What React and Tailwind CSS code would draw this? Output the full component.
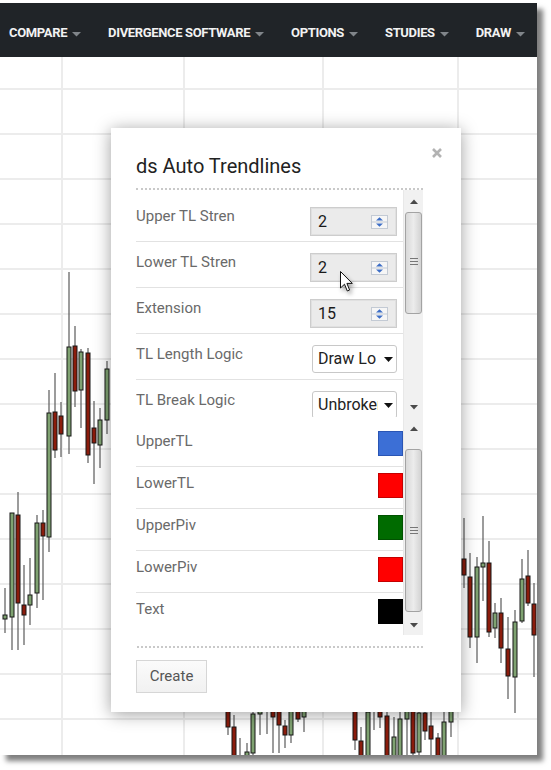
import React from 'react';

const navItems = ['Compare', 'Divergence Software', 'Options', 'Studies', 'Draw'];

// x, bodyTop, bodyBottom, wickTop, wickBottom, up
const candles = [
  [5, 615, 619, 588, 633, 1],
  [12, 513, 617, 513, 650, 1],
  [18, 515, 603, 492, 650, 0],
  [24, 605, 615, 565, 645, 0],
  [30, 595, 605, 558, 625, 1],
  [37, 523, 593, 515, 608, 1],
  [43, 523, 536, 510, 600, 0],
  [49, 413, 537, 390, 552, 1],
  [55, 412, 450, 373, 458, 0],
  [61, 416, 434, 402, 457, 0],
  [69, 347, 436, 272, 454, 1],
  [75, 346, 391, 326, 407, 0],
  [81, 352, 390, 349, 428, 1],
  [88, 353, 455, 348, 463, 0],
  [94, 428, 443, 401, 484, 0],
  [100, 420, 445, 408, 468, 1],
  [107, 369, 420, 361, 434, 1],
  [464, 559, 575, 518, 588, 0],
  [470, 577, 637, 553, 648, 0],
  [477, 567, 637, 557, 663, 1],
  [483, 563, 567, 516, 601, 1],
  [489, 563, 632, 541, 637, 0],
  [495, 613, 628, 603, 638, 1],
  [501, 613, 648, 598, 663, 0],
  [508, 649, 676, 617, 699, 0],
  [515, 622, 677, 610, 713, 1],
  [522, 579, 621, 559, 623, 1],
  [528, 576, 603, 550, 606, 0],
  [534, 604, 635, 583, 677, 0],
  [444, 722, 762, 712, 762, 1],
  [451, 705, 722, 700, 737, 1],
  [228, 700, 727, 690, 735, 0],
  [234, 727, 762, 715, 762, 0],
  [240, 758, 770, 738, 762, 1],
  [247, 752, 762, 743, 762, 1],
  [253, 714, 753, 705, 762, 1],
  [260, 700, 714, 695, 735, 1],
  [267, 700, 705, 695, 734, 1],
  [273, 700, 717, 695, 753, 0],
  [279, 700, 725, 695, 753, 0],
  [285, 726, 735, 720, 748, 0],
  [291, 700, 735, 695, 743, 1],
  [298, 700, 719, 695, 722, 0],
  [304, 700, 717, 695, 732, 1],
  [355, 700, 740, 695, 750, 0],
  [361, 741, 762, 727, 762, 0],
  [368, 712, 762, 700, 762, 1],
  [374, 700, 708, 695, 730, 1],
  [380, 700, 717, 695, 728, 0],
  [387, 716, 762, 705, 762, 0],
  [394, 737, 762, 717, 762, 1],
  [400, 719, 762, 705, 762, 1],
  [407, 700, 719, 695, 762, 1],
  [413, 700, 753, 695, 762, 0],
  [419, 713, 752, 705, 762, 1],
  [425, 713, 731, 705, 740, 0],
  [431, 726, 739, 705, 756, 0],
  [438, 738, 762, 733, 762, 0],
];

const hLines = Array.from({ length: 15 }, (_, i) => 89 + i * 45);
const vLines = [62, 184, 323, 458];

const numberRows = [
  { label: 'Upper TL Stren', value: '2', kind: 'num' },
  { label: 'Lower TL Stren', value: '2', kind: 'num' },
  { label: 'Extension', value: '15', kind: 'num' },
  { label: 'TL Length Logic', value: 'Draw Lo', kind: 'sel' },
  { label: 'TL Break Logic', value: 'Unbroken', kind: 'sel' },
];

const colorRows = [
  { label: 'UpperTL', fill: 'bg-[#3c6fd6]', edge: 'border-[#2a55b4]' },
  { label: 'LowerTL', fill: 'bg-[#ff0000]', edge: 'border-[#c40000]' },
  { label: 'UpperPiv', fill: 'bg-[#006b00]', edge: 'border-[#005200]' },
  { label: 'LowerPiv', fill: 'bg-[#ff0000]', edge: 'border-[#c40000]' },
  { label: 'Text', fill: 'bg-[#000000]', edge: 'border-[#000000]' },
];

const Caret = () => (
  <svg width="9" height="5" viewBox="0 0 9 5" className="mt-[2px]">
    <path d="M0 0H9L4.5 4.5Z" fill="#80858a" />
  </svg>
);

const Chart = () => (
  <svg className="absolute left-0 top-0" width="537" height="698" viewBox="0 57 537 698">
    {hLines.map((y) => (
      <line key={'h' + y} x1="0" x2="537" y1={y} y2={y} stroke="#ececec" strokeWidth="2" />
    ))}
    {vLines.map((x) => (
      <line key={'v' + x} x1={x} x2={x} y1="57" y2="755" stroke="#ececec" strokeWidth="2" />
    ))}
    {candles.map(([x, bt, bb, wt, wb, up], i) => (
      <g key={i}>
        <line x1={x} x2={x} y1={wt} y2={wb} stroke="#5a5a5a" strokeWidth="1.2" />
        <rect
          x={x - 2}
          y={bt}
          width="4"
          height={Math.max(bb - bt, 3)}
          fill={up ? '#7fa271' : '#8b1c0c'}
          stroke="#161616"
          strokeWidth="1"
        />
      </g>
    ))}
  </svg>
);

const Spinner = () => (
  <svg width="17" height="14" viewBox="0 0 17 14">
    <rect x="0.5" y="0.5" width="16" height="13" fill="#f6f6f6" stroke="#c3cad4" />
    <line x1="1" x2="16" y1="7" y2="7" stroke="#c3cad4" />
    <path d="M5 5.5L8.5 2.2L12 5.5Z" fill="#3d6ec6" />
    <path d="M5 8.5L8.5 11.8L12 8.5Z" fill="#3d6ec6" />
  </svg>
);

const NumberInput = ({ value }) => (
  <div className="mt-[11px] flex h-[29px] w-[87px] shrink-0 items-center justify-between border border-[#cdcdcd] bg-[#ebebeb] pl-[7px] pr-[8px] shadow-[inset_0_0_0_1px_#e0e0e0]">
    <span className="text-[16px] leading-none text-[#1a1a1a]">{value}</span>
    <Spinner />
  </div>
);

const Select = ({ value }) => (
  <div className="mt-[11px] flex h-[28px] w-[85px] shrink-0 items-center overflow-hidden rounded-[3px] border border-[#c8c8c8] bg-white">
    <span className="w-[65px] shrink-0 overflow-hidden whitespace-nowrap pl-[5px] text-[16px] leading-none text-[#222]">
      {value}
    </span>
    <svg width="9" height="5" viewBox="0 0 9 5" className="ml-[6px]">
      <path d="M0 0H9L4.5 5Z" fill="#111" />
    </svg>
  </div>
);

const Arrow = ({ down }) => (
  <svg width="8" height="5" viewBox="0 0 8 5">
    <path d={down ? 'M0 0H8L4 4.5Z' : 'M0 5H8L4 0.5Z'} fill="#4a4a4a" />
  </svg>
);

const ScrollBar = ({ thumbGap, thumbHeight, gripTop }) => (
  <div className="flex h-full w-[20px] flex-col border-l border-[#e8e8e8] bg-[#f1f1f1]">
    <div className="flex h-[22px] shrink-0 items-center justify-center">
      <Arrow />
    </div>
    <div
      className={`mx-[1px] shrink-0 rounded-[3px] border border-[#a3a3a3] bg-gradient-to-r from-[#d9d9d9] via-[#ececec] to-[#d3d3d3] ${thumbGap} ${thumbHeight}`}
    >
      <div className={`mx-auto flex w-[8px] flex-col gap-[2px] ${gripTop}`}>
        <div className="h-[1px] bg-[#777]" />
        <div className="h-[1px] bg-[#777]" />
        <div className="h-[1px] bg-[#777]" />
      </div>
    </div>
    <div className="flex-1" />
    <div className="flex h-[20px] shrink-0 items-center justify-center">
      <Arrow down />
    </div>
  </div>
);

const Cursor = () => (
  <svg
    className="absolute left-[340px] top-[268px] drop-shadow-[2px_3px_2px_rgba(0,0,0,0.35)]"
    width="14"
    height="22"
    viewBox="0 0 14 22"
  >
    <path d="M0.5 0.5V17L4.5 13.2L7.3 20L9.6 19L6.9 12.4H12.3Z" fill="#fff" stroke="#111" strokeWidth="1" strokeLinejoin="round" />
  </svg>
);

const Dialog = () => (
  <div className="absolute left-[111px] top-[125px] flex h-[584px] w-[350px] flex-col bg-white pl-[25px] pt-[26px] shadow-[0_2px_16px_rgba(0,0,0,0.38)]">
    <svg className="absolute left-[321px] top-[20px]" width="10" height="10" viewBox="0 0 10 10">
      <path d="M1 1L9 9M9 1L1 9" stroke="#b3b3b3" strokeWidth="2.6" />
    </svg>
    <h2 className="text-[20px] leading-[24px] font-normal text-[#222]">ds Auto Trendlines</h2>
    <div className="mt-[10px] w-[287px] border-t-2 border-dotted border-[#c9c9c9]" />

    <div className="flex h-[227px] w-[287px]">
      <div className="w-[267px] overflow-hidden pt-[6px]">
        {numberRows.map((row) => (
          <div key={row.label} className="flex h-[46px] shrink-0 justify-between border-b border-[#e2e2e2] pr-[6px]">
            <span className="pt-[10px] text-[15px] leading-[20px] text-[#6a6a6a]">{row.label}</span>
            {row.kind === 'num' ? <NumberInput value={row.value} /> : <Select value={row.value} />}
          </div>
        ))}
      </div>
      <ScrollBar thumbGap="mt-0" thumbHeight="h-[102px]" gripTop="mt-[45px]" />
    </div>

    <div className="flex h-[218px] w-[287px]">
      <div className="w-[267px] overflow-hidden pt-[8px]">
        {colorRows.map((row, i) => (
          <div
            key={row.label}
            className={`flex h-[42px] justify-between ${i < colorRows.length - 1 ? 'border-b border-[#e2e2e2]' : ''}`}
          >
            <span className="pt-[6px] text-[15px] leading-[20px] text-[#6a6a6a]">{row.label}</span>
            <div className={`mt-[6px] h-[25px] w-[25px] border ${row.fill} ${row.edge}`} />
          </div>
        ))}
      </div>
      <ScrollBar thumbGap="mt-[10px]" thumbHeight="h-[163px]" gripTop="mt-[77px]" />
    </div>

    <div className="ml-[1px] mt-[11px] w-[286px] border-t-2 border-dotted border-[#c9c9c9]" />
    <button className="mt-[12px] h-[33px] w-[71px] border border-[#d6d6d6] bg-gradient-to-b from-[#fbfbfb] to-[#f1f1f1] text-[15px] text-[#555]">
      Create
    </button>
  </div>
);

export default function App() {
  return (
    <div className="h-[770px] w-[551px] overflow-hidden bg-white font-['Roboto','Liberation_Sans',sans-serif]">
      <div className="relative mt-[3px] flex h-[752px] w-[537px] flex-col bg-white shadow-[6px_6px_5px_rgba(0,0,0,0.5)]">
        <nav className="flex h-[54px] shrink-0 items-center gap-[27px] bg-[#202428] pl-[9px] pt-[6px]">
          {navItems.map((item) => (
            <div key={item} className="flex items-center gap-[5px]">
              <span className="text-[13px] leading-[16px] font-bold uppercase tracking-[-0.35px] text-[#f2f2f2]">{item}</span>
              <Caret />
            </div>
          ))}
        </nav>
        <div className="relative flex-1 overflow-hidden">
          <Chart />
        </div>
        <Dialog />
        <Cursor />
      </div>
    </div>
  );
}
